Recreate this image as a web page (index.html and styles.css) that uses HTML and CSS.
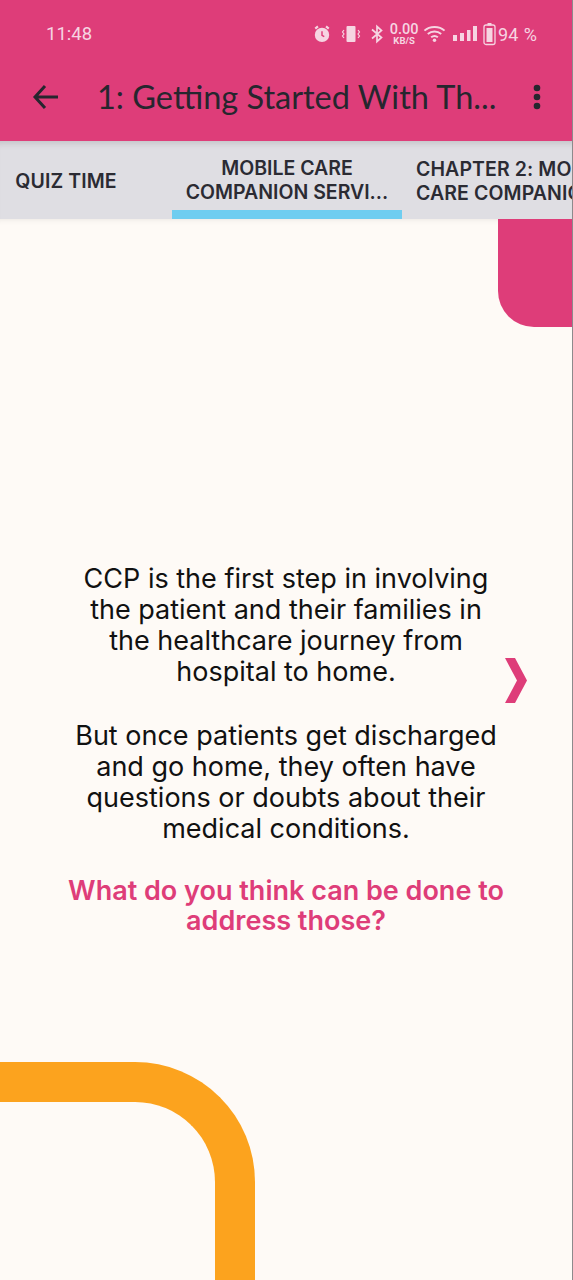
FILE: index.html
```html
<!DOCTYPE html>
<html lang="en">
<head>
<meta charset="utf-8">
<title>Getting Started</title>
<link rel="stylesheet" href="styles.css">
</head>
<body>
<div class="screen">
  <header class="appbar">
    <div class="status">
      <span class="time">11:48</span>
      <div class="status-icons">
        <svg class="ic" width="18" height="20" viewBox="0 0 20 20"><path d="M2.500 4 5.500 1.500M17.500 4 14.500 1.500" stroke="#f6d5e2" stroke-width="2.400"/><circle cx="10" cy="11" r="8" fill="#f6d5e2"/><path d="M10 7v4.500l2.500 1.500" stroke="#de3d79" stroke-width="1.600" fill="none"/></svg>
        <svg class="ic vib" width="20" height="20" viewBox="0 0 20 20"><rect x="5.500" y="2" width="9" height="16" rx="1" fill="#f6d5e2"/><path d="M3 6 1.500 8 3 10l-1.500 2L3 14M17 6l1.500 2L17 10l1.500 2L17 14" stroke="#f6d5e2" stroke-width="1.200" fill="none"/></svg>
        <svg class="ic bt" width="12" height="20" viewBox="0 0 12 20"><path d="M1 5.500 10.500 13.500 6 17.500V2.500l4.500 4L1 14.500" stroke="#f6d5e2" stroke-width="1.700" fill="none"/></svg>
        <span class="speed"><b>0.00</b><i>KB/S</i></span>
        <svg class="ic wifi" width="23" height="20" viewBox="0 0 24 20"><path d="M1.500 6.500C7 1.500 17 1.500 22.500 6.500M5 10c4-3.500 10-3.500 14 0M8.500 13.500c2-1.700 5-1.700 7 0" stroke="#f6d5e2" stroke-width="2" fill="none"/><circle cx="12" cy="16.500" r="1.800" fill="#f6d5e2"/></svg>
        <svg class="ic signal" width="24" height="20" viewBox="0 0 24 20"><rect x="0" y="11" width="4" height="6" fill="#f6d5e2"/><rect x="7" y="9" width="4" height="8" fill="#f6d5e2"/><rect x="14" y="6" width="3.500" height="11" fill="#f6d5e2"/><rect x="20" y="2" width="4" height="15" fill="#f6d5e2"/></svg>
        <svg class="ic batt" width="13" height="24" viewBox="0 0 13 24"><path d="M4.500 1h4v2.500h-4z" fill="#f6d5e2"/><rect x="1" y="3" width="11" height="19.500" rx="2" fill="none" stroke="#f6d5e2" stroke-width="1.300"/><rect x="3.500" y="6" width="6" height="14" fill="#f6d5e2"/></svg>
        <span class="battery">94 %</span>
      </div>
    </div>
    <div class="toolbar">
      <svg class="back" width="27" height="26" viewBox="0 0 27 26"><path d="M26 13H3M13 2 3 13l10 11" stroke="#26262e" stroke-width="3" fill="none"/></svg>
      <h1 class="title">1: Getting Started With Th...</h1>
      <svg class="more" width="10" height="26" viewBox="0 0 10 26"><circle cx="5" cy="4" r="3.300" fill="#26262e"/><circle cx="5" cy="13" r="3.300" fill="#26262e"/><circle cx="5" cy="22" r="3.300" fill="#26262e"/></svg>
    </div>
  </header>
  <nav class="tabs">
    <div class="tab tab-quiz">QUIZ TIME</div>
    <div class="tab tab-active">MOBILE CARE<br>COMPANION SERVI...</div>
    <div class="tab tab-next">CHAPTER 2: MOBILE<br>CARE COMPANION S...</div>
  </nav>
  <main class="content">
    <div class="corner"></div>
    <div class="copy">
      <p>CCP is the first step in involving<br>the patient and their families in<br>the healthcare journey from<br>hospital to home.</p>
      <p>But once patients get discharged<br>and go home, they often have<br>questions or doubts about their<br>medical conditions.</p>
      <p class="ask">What do you think can be done to<br>address those?</p>
    </div>
    <svg class="chevron" width="22" height="45" viewBox="0 0 22 45"><path d="M0 0h10l12 22.500L10 45H0l12-22.500z" fill="#de3d79"/></svg>
    <div class="ring"></div>
  </main>
</div>
</body>
</html>
```
FILE: styles.css
```css
* { box-sizing: border-box; }
html, body { margin: 0; padding: 0; }
body { width: 573px; height: 1280px; overflow: hidden; background: #fefaf6; font-family: "Open Sans", sans-serif; }
.screen { display: flex; flex-direction: column; height: 1280px; border-right: 1px solid #8d8a8c; }
.appbar { background: #de3d79; height: 141px; display: flex; flex-direction: column; flex: none; }
.status { height: 68px; display: flex; align-items: center; justify-content: space-between; padding: 0 35px 0 46px; }
.time { font: 400 18.500px "Roboto", sans-serif; color: #f6d5e2; }
.status-icons { display: flex; align-items: center; }
.ic { display: block; flex: none; }
.vib { margin-left: 10px; }
.bt { margin-left: 10px; }
.speed { display: flex; flex-direction: column; align-items: center; width: 28px; margin-left: 7px; color: #f6d5e2; font-family: "Roboto", sans-serif; line-height: 1; }
.speed b { font-weight: 500; font-size: 14.500px; line-height: 13px; }
.speed i { font-style: normal; font-weight: 700; font-size: 9.500px; line-height: 9px; }
.wifi { margin-left: 5px; }
.signal { margin-left: 7px; }
.batt { margin-left: 6px; }
.battery { margin-left: 2px; font: 400 18px "Roboto", sans-serif; color: #f6d5e2; word-spacing: 1px; }
.toolbar { display: flex; align-items: center; height: 58px; padding: 0 30px 0 32px; }
.back { flex: none; }
.title { margin: 0 0 0 38px; flex: 1; font: 400 32.500px/1 "Lato", sans-serif; color: #26262e; white-space: nowrap; }
.more { flex: none; }
.tabs { height: 78px; flex: none; background: #dfdee3; display: flex; overflow: hidden; box-shadow: inset 0 8px 7px -6px rgba(0,0,0,.14); }
.tab { flex: none; height: 78px; display: flex; align-items: center; justify-content: center; text-align: center; font: 600 19.500px/24px "Inter", sans-serif; letter-spacing: .1px; color: #2b2b33; white-space: nowrap; padding-top: 2px; }
.tab-quiz { width: 132px; }
.tab-active { width: 230px; margin-left: 40px; border-bottom: 9px solid #6fcdf0; padding-top: 9px; letter-spacing: 0; }
.tab-next { margin-left: 14px; text-align: left; }
.content { flex: 1; position: relative; display: flex; flex-direction: column; align-items: center; overflow: hidden; box-shadow: inset 0 6px 6px -6px rgba(0,0,0,.1); }
.corner { position: absolute; top: 0; right: 0; width: 74px; height: 108px; background: #de3d79; border-bottom-left-radius: 36px; }
.copy { margin-top: 344px; width: 100%; text-align: center; font: 400 27px/31px "Inter", sans-serif; color: #111; }
.copy p { margin: 0 0 33px; }
.copy p:nth-child(2) { margin-bottom: 32px; }
.copy .ask { color: #de3d79; font-weight: 600; line-height: 30px; }
.chevron { position: absolute; left: 505px; top: 439px; }
.ring { position: absolute; left: -150px; top: 843px; width: 405px; height: 300px; border: 40px solid #fca31e; border-bottom: 0; border-radius: 0 120px 0 0; }
```
